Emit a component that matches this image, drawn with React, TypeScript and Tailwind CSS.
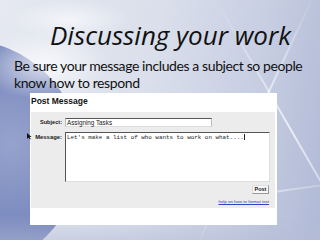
import React from "react";

export default function App() {
  return (
    <div className="relative w-[320px] h-[240px] overflow-hidden bg-[linear-gradient(100deg,#e6e9f1_0%,#dadfeb_45%,#c7cee2_75%,#b0b9d6_100%)]">
      {/* background decorations */}
      <div className="absolute left-[-150px] top-[40px] w-[230px] h-[230px] rounded-full bg-[radial-gradient(circle_at_70%_45%,#8e9bc9_0%,#6f80b9_40%,#5567a6_70%,#7e8dc2_100%)] opacity-90" />
      <div className="absolute left-[-20px] top-[30px] w-[130px] h-[70px] rounded-full bg-[radial-gradient(ellipse_at_center,rgba(255,255,255,0.75)_0%,rgba(255,255,255,0)_70%)]" />
      <div className="absolute left-[10px] top-[0px] w-[120px] h-[40px] bg-[radial-gradient(ellipse_at_center,rgba(255,255,255,0.6)_0%,rgba(255,255,255,0)_70%)]" />
      <div className="absolute left-[250px] top-[-20px] w-[2px] h-[300px] rotate-[25deg] bg-[linear-gradient(180deg,rgba(255,255,255,0)_0%,rgba(255,255,255,0.8)_50%,rgba(255,255,255,0)_100%)]" />
      <div className="absolute left-[290px] top-[-20px] w-[2px] h-[300px] rotate-[-30deg] bg-[linear-gradient(180deg,rgba(255,255,255,0)_0%,rgba(255,255,255,0.7)_50%,rgba(255,255,255,0)_100%)]" />
      <div className="absolute left-[60px] top-[200px] w-[300px] h-[2px] rotate-[-8deg] bg-[linear-gradient(90deg,rgba(255,255,255,0)_0%,rgba(255,255,255,0.8)_50%,rgba(255,255,255,0)_100%)]" />
      <div className="absolute left-[0px] top-[215px] w-[320px] h-[30px] bg-[linear-gradient(180deg,rgba(200,206,226,0)_0%,rgba(180,188,214,0.6)_100%)]" />

      <div className="relative flex flex-col">
        <h1 className="pl-[50px] pt-[20px] h-[57px] text-[26px] leading-[30px] italic text-[#111] font-['Open_Sans',sans-serif]">
          Discussing your work
        </h1>
        <p className="pl-[14px] w-[318px] text-[14px] leading-[17px] tracking-[-0.4px] text-[#111] font-['Lato',sans-serif]">
          Be sure your message includes a subject so people know how to respond
        </p>

        <div className="ml-[30px] mt-[2px] w-[247px] h-[132px] bg-white font-['Liberation_Sans',Arial,sans-serif]">
          <div className="pl-[1px] pt-[3px] h-[19px] text-[8.5px] leading-[10px] font-bold text-[#111]">
            Post Message
          </div>
          <div className="ml-[1px] w-[244px] h-[96px] bg-[#ececec] flex flex-col pt-[6px]">
            <div className="flex items-center">
              <div className="w-[34px] pr-[3px] text-right text-[5.6px] font-bold text-[#222]">Subject:</div>
              <div className="w-[147px] h-[9px] bg-white border-t border-t-[#555] border-x border-b border-x-[#bbb] border-b-[#ddd] text-[6.3px] leading-[8px] pl-[1px] text-[#222]">
                Assigning Tasks
              </div>
            </div>
            <div className="flex mt-[5px]">
              <div className="w-[34px] pr-[3px] text-right text-[5.9px] font-bold text-[#222] pt-[1px]">Message:</div>
              <div className="w-[205px] h-[50px] bg-white border-t border-l border-t-[#555] border-l-[#555] border-r border-b border-r-[#ddd] border-b-[#ddd] text-[5.9px] leading-[7px] pl-[1px] pt-[1px] text-[#222] font-['Liberation_Mono',monospace]">
                Let's make a list of who wants to work on what....<span className="inline-block w-[0.6px] h-[6px] bg-[#222] align-middle" />
              </div>
            </div>
            <div className="flex justify-end pr-[6px] mt-[3px]">
              <div className="w-[17px] h-[9px] bg-[#f7f7f7] border border-[#999] border-t-[#ddd] border-l-[#ddd] text-[5.5px] leading-[7px] font-bold text-center text-[#222]">
                Post
              </div>
            </div>
            <div className="flex justify-end pr-[6px] mt-[5px]">
              <span className="text-[4.4px] leading-[5px] text-[#3344bb] underline">help on how to format text</span>
            </div>
          </div>
        </div>
      </div>

      {/* mouse pointer */}
      <svg className="absolute left-[27px] top-[133px]" width="5" height="7" viewBox="0 0 5 7">
        <path d="M0 0 L0 6 L1.5 4.5 L3 6.5 L3.8 6 L2.5 4 L4.5 4 Z" fill="#111" />
      </svg>
    </div>
  );
}
